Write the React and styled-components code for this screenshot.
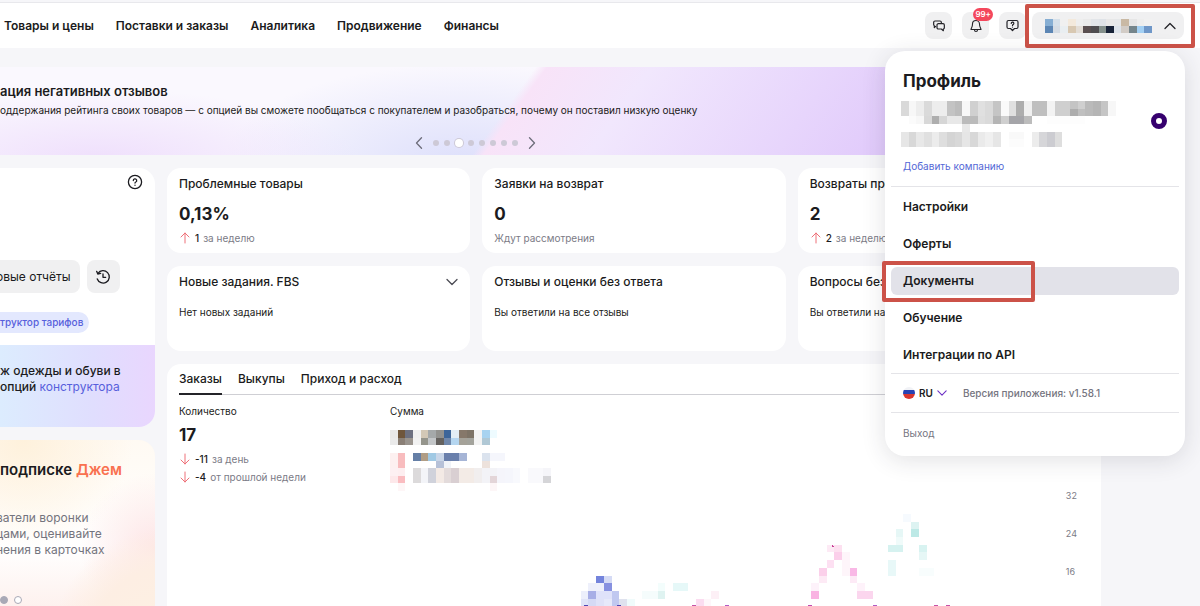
import React, { useState } from 'react';
import styled, { createGlobalStyle, css } from 'styled-components';

const navLinks = [
  'Товары и цены',
  'Поставки и заказы',
  'Аналитика',
  'Продвижение',
  'Финансы',
];

const menuLinks = [
  'Настройки',
  'Оферты',
  'Документы',
  'Обучение',
  'Интеграции по API',
];

const tabs = ['Заказы', 'Выкупы', 'Приход и расход'];

const cards = [
  { title: 'Проблемные товары', value: '0,13%', delta: '1', note: 'за неделю' },
  { title: 'Заявки на возврат', value: '0', note: 'Ждут рассмотрения' },
  { title: 'Возвраты про', value: '2', delta: '2', note: 'за неделю' },
  { title: 'Новые задания. FBS', text: 'Нет новых заданий', expandable: true },
  { title: 'Отзывы и оценки без ответа', text: 'Вы ответили на все отзывы' },
  { title: 'Вопросы без', text: 'Вы ответили на' },
];

// masked values: one token per tile, two digits are a grey, "-" is empty
const accountTiles = [
  '86aed3 d5e0ea f0 f3e9dc ee ea e2e5e9 dfe3e8 e8 e6e8ea c9b9a4 e6 ee f1',
  '5c86b4 d5dce4 e9eef1 d8c8b2 e3ddd6 5a4f50 4f4d50 84908c 182338 dde3ea d2ccc6 75858b a3d0f4 6f97c8',
];

const profileTiles = [
  'd9 f7 ed da ed ed c3 bc f8 d0 e0 da c5 fa e0 ad f0 bf bf f3 cf cf c4 cf ba b5 c5 f7',
  'd9 f7 ed da ed ed c3 bc f8 d0 e0 da c5 fa e0 ad f0 bf bf f3 cf cf ad bf ba b5 c5 f7',
  '- fb f7 d8 ae d6 e8 e8 bb bb de da b5 cf a5a5a9 a5a5a9 bc - - fd fd fd fd fd - - - -',
  '- - - - - - - - e8 - - - - - - - - - - - - - - - - - - -',
  'e6 d8 e8 e0 ec de d4 d8 e6 d8 ea f0 e6 - f9 f9 - ec d6d6d9 ccccd1 de - - - - - - -',
  'e6 d8 e8 e0 ec de d4 d8 e6 d8 ea f0 e6 - fc fc - ec d6d6d9 ccccd1 de - - - - - - -',
];

const sumTiles = [
  'e8 6f563c 6d7080 f0 d3c8b6 a5a9aa 92928f 3c6599 e3eef5 86786a 7d7366 f3 a8d3f0 eefbff - - - - - - -',
  'ea 8a7f76 9a948e f2 95958c c3c6c8 65625f 7088ab b5d6f0 a5a299 a3a39c f3 b0c8d5 - - - - - - - -',
  '- - - - - - - - - - - - - - - - - - - - -',
  'fdf0f0 f8bcbe - 657fa6 b09d85 a0c9e4 c9d6e8 6a80ac 6a80ac a6b5d6 - - dbe3ee f5f6fc f5f6fc - - - - - -',
  'fdf0f0 f8bcbe - - - - b6c1d8 f0f3f8 - - - - ede2dc - - - - - - - -',
  'fdf0f2 fdeef0 - dcdadb f3f4f8 d0d2db f3eae5 e3dbdb d9cfd2 f3ebe6 f3ebe6 f1eeee f3f3f7 f3f3f7 f5f5fb f5f6fc f8f9fd - f9f9fc f9f9fc f5f5f9',
  'fde8ea fabcc0 - dcdadb f3f4f8 d0d2db f3eae5 e3dbdb d9cfd2 f3ebe6 f3ebe6 f1eeee f3f3f7 e3d5d8 f5f5fb f5f6fc f8f9fd - f9f9fc f9f9fc d5d5d8',
  '- fef6f7 - - - - - - - - - - - fdf6f7 - - - - - - -',
];

// column, row, width, height, colour
const chartTiles = [
  [2, 8, 1, 1, '#7484dc'],
  [3, 8, 1, 1, '#d5dbf5'],
  [1, 9, 2, 1, '#eef0fb'],
  [3, 9, 1, 1, '#8791e0'],
  [0, 10, 1, 1, '#eceffb'],
  [1, 10, 1, 1, '#a7aee6'],
  [2, 10, 2, 1, '#dfe2fa'],
  [4, 10, 1, 2, '#c0c8f0'],
  [0, 11, 1, 1, '#e0e4f8'],
  [1, 11, 1, 1, '#d5daf5'],
  [2, 11, 1, 1, '#dfe2f8'],
  [3, 11, 1, 1, '#e6e9fa'],
  [5, 11, 1, 1, '#dfe2ee'],
  [6, 11, 1, 1, '#f0fbfb'],
  [8, 10, 2, 1, '#f5fcfc'],
  [10, 9, 1, 1, '#f3fdfc'],
  [10, 10, 1, 1, '#dff3f1'],
  [12, 9, 2, 1, '#e6f8f8'],
  [15, 11, 1, 1, '#fbdcf0'],
  [16, 11, 1, 1, '#fef6fa'],
  [17, 10, 1, 1, '#fdf0f6'],
  [32, 4, 1, 1, '#fdeaf5'],
  [33, 4, 1, 1, '#fde0f0'],
  [33, 5, 1, 1, '#fbcfea'],
  [32, 6, 1, 1, '#fde0f2'],
  [34, 5, 1, 3, '#fef5fa'],
  [31, 7, 1, 1, '#fbd0ea'],
  [35, 7, 1, 1, '#f9b8e6'],
  [31, 8, 1, 1, '#fdeaf5'],
  [35, 8, 1, 1, '#fdeaf6'],
  [30, 9, 1, 1, '#fdf2fa'],
  [36, 9, 1, 1, '#fef2fa'],
  [30, 10, 1, 1, '#f9b3e2'],
  [36, 10, 2, 1, '#fbd6ee'],
  [42, 0, 1, 1, '#f6fafe'],
  [43, 1, 1, 1, '#ddf3f2'],
  [41, 2, 1, 1, '#e6f7f6'],
  [43, 2, 1, 1, '#bde9e6'],
  [41, 3, 1, 1, '#f0fbfa'],
  [40, 4, 2, 1, '#d6f2f0'],
  [44, 4, 1, 1, '#d8f3f1'],
  [44, 5, 1, 1, '#e6f7f6'],
  [40, 6, 1, 2, '#e8f8f8'],
  [44, 7, 2, 1, '#f8fdfd'],
];

const chartMarks = [
  [0.4, '#5146b4'],
  [4.7, '#5146b4'],
  [14.5, '#c653a8'],
  [18.8, '#b25bc4'],
  [29.6, '#c04bb0'],
  [38, '#b25bc4'],
  [46, '#c653a8'],
  [47.5, '#c653a8'],
];

function Mosaic({ rows, tokens }) {
  const cols = tokens[0].split(' ').length;
  return (
    <Tiles
      $cols={cols}
      $height={rows}
      viewBox={`0 0 ${cols} ${tokens.length}`}
      preserveAspectRatio="none"
      shapeRendering="crispEdges"
      aria-hidden="true"
    >
      {tokens.map((row, y) =>
        row.split(' ').map((token, x) => {
          if (token === '-') return null;
          const color = token.length === 2 ? token.repeat(3) : token;
          return (
            <rect key={`${x}-${y}`} x={x} y={y} width="1" height="1" fill={`#${color}`} />
          );
        })
      )}
    </Tiles>
  );
}

function Chevron({ d, width = 10, height = 10, color = '#242429' }) {
  return (
    <svg width={width} height={height} viewBox="0 0 12 12" fill="none" stroke={color} strokeWidth="1.3" strokeLinecap="round" strokeLinejoin="round" aria-hidden="true">
      <path d={d} />
    </svg>
  );
}

const LEFT = 'M8.5 0.8L3.5 6l5 5.2';
const RIGHT = 'M3.5 0.8L8.5 6l-5 5.2';
const DOWN = 'M1 3.5l5 5 5-5';
const UP = 'M1 8.5l5-5 5 5';

function Arrow({ down }) {
  return (
    <svg width="12" height="12" viewBox="0 0 12 12" fill="none" stroke="#ee7078" strokeWidth="1" strokeLinecap="round" strokeLinejoin="round" aria-hidden="true">
      <path d={down ? 'M6 1v10M2 7l4 4 4-4' : 'M6 11V1M2 5l4-4 4 4'} />
    </svg>
  );
}

function ChatIcon() {
  return (
    <svg width="12" height="12" viewBox="0 0 36 36" fill="none" stroke="#242429" strokeWidth="3.6" strokeLinejoin="round" strokeLinecap="round" aria-hidden="true">
      <path d="M8 19l-4 4v-6a4 4 0 0 1-2-3V7a4 4 0 0 1 4-4h15a4 4 0 0 1 4 4v3" />
      <path d="M16 11h14a4 4 0 0 1 4 4v8a4 4 0 0 1-3 4v5l-6-5h-9a4 4 0 0 1-4-4v-8a4 4 0 0 1 4-4z" />
    </svg>
  );
}

function BellIcon() {
  return (
    <svg width="12" height="14" viewBox="0 0 24 28" fill="none" stroke="#242429" strokeWidth="2.2" strokeLinejoin="round" strokeLinecap="round" aria-hidden="true">
      <path d="M12 3a7 7 0 0 0-7 7c0 7-3 8-3 11h20c0-3-3-4-3-11a7 7 0 0 0-7-7z" />
      <path d="M9 22a3 3 0 0 0 6 0" />
    </svg>
  );
}

function SupportIcon() {
  return (
    <svg width="13" height="13" viewBox="0 0 26 26" fill="none" stroke="#242429" strokeWidth="2.4" strokeLinejoin="round" strokeLinecap="round" aria-hidden="true">
      <path d="M5 3h16a3 3 0 0 1 3 3v10a3 3 0 0 1-3 3h-4l-4 4-4-4H5a3 3 0 0 1-3-3V6a3 3 0 0 1 3-3z" />
      <path d="M10.5 9a2.6 2.6 0 1 1 3.8 2.2c-.9.5-1.3.9-1.3 1.8" />
      <path d="M13 16v.1" />
    </svg>
  );
}

function HelpIcon() {
  return (
    <svg width="16" height="16" viewBox="0 0 16 16" fill="none" stroke="#1b1b20" strokeWidth="1.3" strokeLinecap="round" strokeLinejoin="round" aria-hidden="true">
      <circle cx="8" cy="8" r="6.6" />
      <path d="M6.3 6.5a1.7 1.7 0 1 1 2.5 1.5c-.6.3-.8.6-.8 1.1" />
      <path d="M8 11.2v.1" />
    </svg>
  );
}

function HistoryIcon() {
  return (
    <svg width="16" height="16" viewBox="0 0 24 24" fill="none" stroke="#1b1b20" strokeWidth="2" strokeLinecap="round" strokeLinejoin="round" aria-hidden="true">
      <path d="M4.5 6.5A9.3 9.3 0 1 1 3.4 15" />
      <path d="M2.5 3.5l1.7 4 4.3-1" />
      <path d="M12 7.500v5h4" />
    </svg>
  );
}

function FlagIcon() {
  return (
    <svg width="12" height="12" viewBox="0 0 12 12" aria-hidden="true">
      <clipPath id="flag">
        <circle cx="6" cy="6" r="6" />
      </clipPath>
      <g clipPath="url(#flag)">
        <rect width="12" height="4" y="0" fill="#f1f2f6" />
        <rect width="12" height="4" y="3" fill="#2743b4" />
        <rect width="12" height="5" y="7" fill="#d9372f" />
      </g>
    </svg>
  );
}

function ProfileMenu() {
  return (
    <Menu>
      <MenuTitle>Профиль</MenuTitle>
      <Company>
        <Mosaic tokens={profileTiles} rows={46} />
        <Radio type="radio" name="company" aria-label="Компания" defaultChecked />
      </Company>
      <AddLink href="#company">Добавить компанию</AddLink>
      <Divider />
      <MenuList>
        {menuLinks.map((link) => (
          <li key={link}>
            <MenuLink href="#menu" $active={link === 'Документы'}>
              {link}
              {link === 'Документы' && <MenuHighlight />}
            </MenuLink>
          </li>
        ))}
      </MenuList>
      <Divider />
      <LanguageRow>
        <Language type="button">
          <FlagIcon />
          RU
          <Chevron d={DOWN} color="#6b2fc4" />
        </Language>
        <span>Версия приложения: v1.58.1</span>
      </LanguageRow>
      <Divider />
      <Logout type="button">Выход</Logout>
    </Menu>
  );
}

export default function App() {
  const [menuOpen, setMenuOpen] = useState(true);
  const [tab, setTab] = useState(tabs[0]);

  return (
    <Page>
      <GlobalStyle />
      <Header>
        <Nav>
          {navLinks.map((link) => (
            <NavLink key={link} href="#nav">
              {link}
            </NavLink>
          ))}
        </Nav>
        <Tools>
          <IconButton type="button" aria-label="Чаты">
            <ChatIcon />
          </IconButton>
          <IconButton type="button" aria-label="Уведомления">
            <BellIcon />
            <Badge>99+</Badge>
          </IconButton>
          <IconButton type="button" aria-label="Поддержка">
            <SupportIcon />
          </IconButton>
        </Tools>
        <Account
          type="button"
          aria-label="Профиль"
          onClick={() => setMenuOpen(!menuOpen)}
        >
          <Mosaic tokens={accountTiles} rows={14} />
          <Chevron d={menuOpen ? UP : DOWN} width={12} height={12} />
          <AccountHighlight />
        </Account>
        {menuOpen && <ProfileMenu />}
      </Header>

      <Content>
        <Banner>
          <BannerTitle>ация негативных отзывов</BannerTitle>
          <BannerText>
            оддержания рейтинга своих товаров — с опцией вы сможете пообщаться с
            покупателем и разобраться, почему он поставил низкую оценку
          </BannerText>
          <Pager>
            <PagerButton type="button" aria-label="Назад">
              <Chevron d={LEFT} width={12} height={12} color="#6d6d7a" />
            </PagerButton>
            <Dots>
              {[0, 1, 2, 3, 4, 5, 6, 7].map((dot) => (
                <Dot key={dot} $active={dot === 2} />
              ))}
            </Dots>
            <PagerButton type="button" aria-label="Вперёд">
              <Chevron d={RIGHT} width={12} height={12} color="#6d6d7a" />
            </PagerButton>
          </Pager>
        </Banner>

        <Columns>
          <Sidebar>
            <Reports>
              <ReportsBody>
                <HelpButton type="button" aria-label="Справка">
                  <HelpIcon />
                </HelpButton>
                <ButtonRow>
                  <ReportButton type="button">овые отчёты</ReportButton>
                  <HistoryButton type="button" aria-label="История">
                    <HistoryIcon />
                  </HistoryButton>
                </ButtonRow>
                <Chip href="#tariffs">труктор тарифов</Chip>
              </ReportsBody>
              <Promo>
                ж одежды и обуви в<br />
                опций <a href="#options">конструктора</a>
              </Promo>
            </Reports>
            <Jam>
              <JamTitle>
                подписке <span>Джем</span>
              </JamTitle>
              <JamText>
                ватели воронки
                <br />
                цами, оценивайте
                <br />
                нения в карточках
              </JamText>
              <JamDots>
                <JamDot $filled />
                <JamDot />
              </JamDots>
            </Jam>
          </Sidebar>

          <Main>
            <CardGrid>
              {cards.map((card) => (
                <Card key={card.title}>
                  <CardTitle>
                    {card.title}
                    {card.expandable && <Chevron d={DOWN} width={12} height={12} color="#4c4c55" />}
                  </CardTitle>
                  {card.value && <Value>{card.value}</Value>}
                  {card.note && (
                    <Note>
                      {card.delta && <Arrow />}
                      {card.delta && <b>{card.delta}</b>}
                      {card.note}
                    </Note>
                  )}
                  {card.text && <CardText>{card.text}</CardText>}
                </Card>
              ))}
            </CardGrid>

            <Orders>
              <Tabs role="tablist">
                {tabs.map((name) => (
                  <Tab
                    key={name}
                    type="button"
                    role="tab"
                    aria-selected={tab === name}
                    $active={tab === name}
                    onClick={() => setTab(name)}
                  >
                    {name}
                  </Tab>
                ))}
              </Tabs>
              <Totals>
                <div>
                  <Label>Количество</Label>
                  <Value>17</Value>
                  <Note>
                    <Arrow down />
                    <b>-11</b> за день
                  </Note>
                  <Note>
                    <Arrow down />
                    <b>-4</b> от прошлой недели
                  </Note>
                </div>
                <div>
                  <Label $wide>Сумма</Label>
                  <Mosaic tokens={sumTiles} rows={61} />
                </div>
              </Totals>
              <Chart>
                <Plot viewBox="0 0 885 117" preserveAspectRatio="xMinYMin meet" shapeRendering="crispEdges" aria-hidden="true">
                  <g transform="translate(401 25) scale(7.667)">
                    {chartTiles.map(([x, y, width, height, color]) => (
                      <rect key={`${x}-${y}`} x={x} y={y} width={width} height={height} fill={color} />
                    ))}
                    {chartMarks.map(([x, color]) => (
                      <rect key={x} x={x} y="11.9" width="0.5" height="0.15" fill={color} />
                    ))}
                    <circle cx="32.8" cy="4.2" r="0.13" fill="#c93f96" />
                  </g>
                </Plot>
                <Axis>
                  <span>32</span>
                  <span>24</span>
                  <span>16</span>
                </Axis>
              </Chart>
            </Orders>
          </Main>
        </Columns>
      </Content>
    </Page>
  );
}

const GlobalStyle = createGlobalStyle`
  body {
    margin: 0;
    background: #f6f6f9;
    color: #1b1b20;
    font-family: Inter, 'Liberation Sans', sans-serif;
    font-size: 12px;
    line-height: 16px;
  }

  button {
    border: 0;
    padding: 0;
    background: none;
    color: inherit;
    font: inherit;
    cursor: pointer;
  }

  a {
    color: inherit;
    text-decoration: none;
  }

  svg {
    display: block;
    flex: none;
  }
`;

const Page = styled.div`
  height: 100vh;
  overflow: hidden;
  padding-top: 2px;
  box-sizing: border-box;
`;

const Header = styled.header`
  position: relative;
  z-index: 1;
  display: flex;
  align-items: center;
  height: 46px;
  padding: 0 16px 0 4px;
  border-top: 1px solid #e8e8ec;
  background: #fff;
  box-sizing: border-box;
`;

const Nav = styled.nav`
  display: flex;
  gap: 22px;
  flex: 1;
`;

const NavLink = styled.a`
  font-weight: 600;
  white-space: nowrap;
`;

const Tools = styled.div`
  display: flex;
  gap: 10px;
  margin-right: 6px;
`;

const IconButton = styled.button`
  position: relative;
  display: flex;
  align-items: center;
  justify-content: center;
  width: 27px;
  height: 27px;
  border-radius: 8px;
  background: #f0f0f1;
`;

const Badge = styled.span`
  position: absolute;
  top: -4px;
  right: -4px;
  padding: 0 2px;
  border-radius: 7px;
  background: #f4475c;
  color: #fff;
  font-size: 8px;
  line-height: 13px;
  font-weight: 600;
`;

const Account = styled.button`
  position: relative;
  display: flex;
  align-items: center;
  justify-content: space-between;
  width: 152px;
  height: 27px;
  padding: 0 8px 0 13px;
  border-radius: 8px;
  background: #f0f0f1;
  box-sizing: border-box;
`;

const Highlight = styled.span`
  position: absolute;
  border: 4px solid #cc5248;
  border-radius: 2px;
  pointer-events: none;
`;

const AccountHighlight = styled(Highlight)`
  inset: -8px -11px -9px -7px;
`;

const MenuHighlight = styled(Highlight)`
  inset: -6px 144px -7px -9px;
`;

const Tiles = styled.svg`
  width: ${({ $cols }) => Math.round(($cols * 23) / 3)}px;
  height: ${({ $height }) => $height}px;
`;

const Menu = styled.div`
  position: absolute;
  top: 48px;
  right: 15px;
  width: 300px;
  padding: 19px 6px 15px;
  border-radius: 20px;
  background: #fff;
  box-shadow: 0 4px 24px rgba(40, 40, 60, 0.14);
  box-sizing: border-box;
`;

const MenuTitle = styled.h2`
  margin: 0 12px 9px;
  font-size: 17px;
  line-height: 22px;
  font-weight: 700;
`;

const Company = styled.div`
  display: flex;
  justify-content: space-between;
  padding: 0 12px 0 10px;
`;

const Radio = styled.input`
  appearance: none;
  width: 16px;
  height: 16px;
  margin: 12px 0 0;
  border: 5px solid #36006e;
  border-radius: 50%;
  background: #fff;
  box-sizing: border-box;
`;

const AddLink = styled.a`
  display: block;
  margin: 11px 12px 12px;
  color: #5468d6;
  font-size: 10px;
`;

const Divider = styled.hr`
  margin: 0;
  border: 0;
  border-top: 1px solid #e4e4e8;
`;

const MenuList = styled.ul`
  display: flex;
  flex-direction: column;
  gap: 9px;
  margin: 0;
  padding: 6px 0 4px;
  list-style-type: none;
`;

const MenuLink = styled.a`
  position: relative;
  display: block;
  padding: 6px 12px;
  border-radius: 6px;
  font-weight: 600;

  ${({ $active }) =>
    $active &&
    css`
      background: #e2e2e9;
    `}
`;

const LanguageRow = styled.div`
  display: flex;
  align-items: center;
  gap: 16px;
  padding: 11px 12px;
  color: #75757f;
  font-size: 10px;
  font-weight: 500;
`;

const Language = styled.button`
  display: flex;
  align-items: center;
  gap: 4px;
  color: #1b1b20;
  font-weight: 600;
`;

const Logout = styled.button`
  display: block;
  margin: 12px 12px 0;
  color: #75757f;
  font-size: 10px;
`;

const Content = styled.div`
  padding: 19px 99px 0 0;
`;

const Banner = styled.section`
  height: 88px;
  padding: 16px 0 0;
  box-sizing: border-box;
  background:
    linear-gradient(
      126deg,
      transparent 46%,
      #f8e3f8 47%,
      #f1e7fd 56%,
      #e7d5fc 72%,
      #dcc2fa 88%,
      #d9c8fb
    ),
    radial-gradient(ellipse 260px 70px at 9% 105%, #efdffc, transparent),
    radial-gradient(ellipse 240px 100px at 42% 110%, #dddffb, transparent),
    #faf8fe;
`;

const BannerTitle = styled.h2`
  margin: 0 0 3px;
  font-size: 13px;
  line-height: 16px;
  font-weight: 600;
`;

const BannerText = styled.p`
  margin: 0;
  font-size: 10px;
  white-space: nowrap;
`;

const Pager = styled.div`
  display: flex;
  align-items: center;
  justify-content: center;
  gap: 8px;
  margin-top: 19px;
  padding-right: 150px;
`;

const PagerButton = styled.button`
  display: flex;
`;

const Dots = styled.div`
  display: flex;
  align-items: center;
  gap: 5px;
`;

const Dot = styled.span`
  width: ${({ $active }) => ($active ? 8 : 6)}px;
  height: ${({ $active }) => ($active ? 8 : 6)}px;
  border-radius: 50%;
  background: ${({ $active }) => ($active ? '#fff' : '#cdc9d6')};
  box-shadow: ${({ $active }) => ($active ? '0 0 0 1px #cdc9d6' : 'none')};
`;

const Columns = styled.div`
  display: flex;
  gap: 12px;
  margin-top: 13px;
`;

const Sidebar = styled.aside`
  display: flex;
  flex-direction: column;
  gap: 13px;
  flex: none;
  width: 155px;
  white-space: nowrap;
`;

const Reports = styled.section`
  border-radius: 0 16px 16px 0;
  background: #fff;
  overflow: hidden;
`;

const ReportsBody = styled.div`
  padding: 6px 12px 12px 0;
`;

const HelpButton = styled.button`
  display: block;
  margin: 0 0 70px auto;
`;

const ButtonRow = styled.div`
  display: flex;
  gap: 7px;
  margin-left: -4px;
`;

const ReportButton = styled.button`
  height: 33px;
  padding-right: 9px;
  border-radius: 0 8px 8px 0;
  background: #f0f0f1;
`;

const HistoryButton = styled.button`
  display: flex;
  align-items: center;
  justify-content: center;
  width: 33px;
  height: 33px;
  border-radius: 8px;
  background: #f0f0f1;
`;

const Chip = styled.a`
  display: inline-block;
  margin-top: 19px;
  padding: 0 6px 0 0;
  border-radius: 0 11px 11px 0;
  background: #e3e8fe;
  color: #575fdc;
  font-size: 10px;
  line-height: 21px;
  font-weight: 500;
`;

const Promo = styled.div`
  padding: 18px 0 32px;
  background: linear-gradient(90deg, #dcecfe, #e0defe 60%, #e9d6fe);
  font-weight: 500;

  a {
    color: #575fdc;
    font-weight: 400;
  }
`;

const Jam = styled.section`
  padding: 20px 0 16px;
  border-radius: 0 16px 16px 0;
  background:
    radial-gradient(circle at 110% 115%, #fdf1e2 0, #fdeee3 80px, transparent 120px),
    radial-gradient(circle at 100% 60%, #fde5e6, transparent 75px),
    radial-gradient(circle at 15% 0, #fef1dc, transparent 110px),
    linear-gradient(180deg, #fffaf3, #fff 60%, #fdeeea);
`;

const JamTitle = styled.h3`
  margin: 0 0 30px;
  font-size: 15px;
  line-height: 20px;
  font-weight: 600;

  span {
    color: #f9714f;
  }
`;

const JamText = styled.p`
  margin: 0 0 0 -4px;
  color: #74747d;
`;

const JamDots = styled.div`
  display: flex;
  gap: 6px;
  margin-top: 38px;
`;

const JamDot = styled.span`
  width: 8px;
  height: 8px;
  border: 1px solid #a9a9b6;
  border-radius: 50%;
  background: ${({ $filled }) => ($filled ? '#a9a9b6' : '#fff')};
  box-sizing: border-box;
`;

const Main = styled.main`
  flex: 1;
  min-width: 0;
`;

const CardGrid = styled.div`
  display: grid;
  grid-template-columns: repeat(3, minmax(0, 1fr));
  gap: 13px 12px;
`;

const Card = styled.section`
  min-height: 85px;
  padding: 8px 12px 7px;
  border-radius: 14px;
  background: #fff;
  box-sizing: border-box;
`;

const CardTitle = styled.h3`
  display: flex;
  align-items: center;
  justify-content: space-between;
  margin: 0 0 12px;
  font-size: 12px;
  font-weight: 500;
`;

const Value = styled.div`
  margin-bottom: 6px;
  font-size: 17px;
  line-height: 20px;
  font-weight: 700;
`;

const Note = styled.div`
  display: flex;
  align-items: center;
  gap: 4px;
  color: #7b7b86;
  font-size: 10px;

  & + & {
    margin-top: 2px;
  }

  b {
    color: #1b1b20;
    font-weight: 500;
  }
`;

const CardText = styled.p`
  margin: 14px 0 0;
  font-size: 10px;
  white-space: nowrap;
`;

const Orders = styled.section`
  margin-top: 13px;
  padding: 7px 12px 40px;
  border-radius: 14px 14px 0 0;
  background: #fff;
`;

const Tabs = styled.div`
  display: flex;
  gap: 16px;
  border-bottom: 1px solid #cfcfd4;
`;

const Tab = styled.button`
  margin-bottom: -1px;
  padding-bottom: 6px;
  border-bottom: 2px solid ${({ $active }) => ($active ? '#242429' : 'transparent')};
  font-weight: 500;
`;

const Totals = styled.div`
  display: grid;
  grid-template-columns: 211px 1fr;
  height: 94px;
`;

const Label = styled.div`
  margin: 8px 0 ${({ $wide }) => ($wide ? 11 : 6)}px;
  font-size: 10px;
`;

const Chart = styled.div`
  display: flex;
  align-items: flex-start;
`;

const Plot = styled.svg`
  flex: 1;
  min-width: 0;
`;

const Axis = styled.div`
  display: flex;
  flex-direction: column;
  gap: 24px;
  padding-right: 12px;
  color: #7b7b86;
  font-size: 9px;
  line-height: 14px;
`;
